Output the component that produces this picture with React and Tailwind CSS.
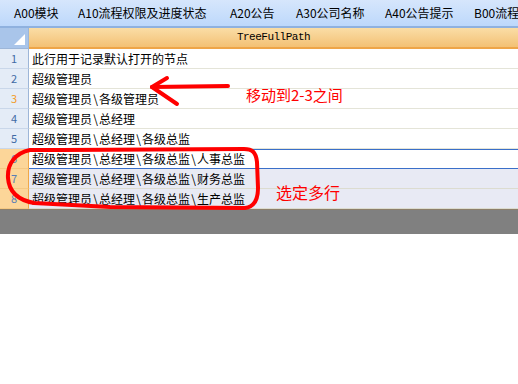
import React from "react";

const tabs = [
  { label: "A00模块", w: "w-[64px]" },
  { label: "A10流程权限及进度状态", w: "w-[152px]" },
  { label: "A20公告", w: "w-[66px]" },
  { label: "A30公司名称", w: "w-[89px]" },
  { label: "A40公告提示", w: "w-[89px]" },
  { label: "B00流程", w: "w-[60px]" },
];

const rows = [
  "此行用于记录默认打开的节点",
  "超级管理员",
  "超级管理员\\各级管理员",
  "超级管理员\\总经理",
  "超级管理员\\总经理\\各级总监",
  "超级管理员\\总经理\\各级总监\\人事总监",
  "超级管理员\\总经理\\各级总监\\财务总监",
  "超级管理员\\总经理\\各级总监\\生产总监",
];

const cjk = { fontFamily: '"Noto Sans CJK SC", "Noto Sans", sans-serif' };

// backslash in the old grid font is a half-width cell, wider than Noto's
const PathText = ({ text }) => {
  const parts = text.split("\\");
  return (
    <span>
      {parts.map((p, i) => (
        <React.Fragment key={i}>
          {i > 0 && <span className="inline-block w-[7px] text-center">\</span>}
          {p}
        </React.Fragment>
      ))}
    </span>
  );
};

export default function App() {
  return (
    <div className="relative w-[518px] h-[384px] bg-white overflow-hidden" style={cjk}>
      {/* tab strip */}
      <div className="flex h-[28px] items-center pl-[14px] bg-gradient-to-b from-[#d6e6fc] to-[#bdd8fb] border-b-2 border-[#8fb1df] whitespace-nowrap overflow-hidden">
        {tabs.map((t) => (
          <div key={t.label} className={`${t.w} shrink-0 text-[12px] leading-none text-black`}>
            {t.label}
          </div>
        ))}
      </div>

      {/* header row */}
      <div className="flex h-[21px]">
        <div className="relative w-[29px] shrink-0 bg-[#a9c5ea] border-r border-[#9db6d8] border-b border-[#9db6d8]">
          <div className="absolute right-[3px] bottom-[3px] w-0 h-0 border-l-[11px] border-l-transparent border-b-[11px] border-b-white" />
        </div>
        <div className="flex-1 flex items-center justify-center bg-gradient-to-b from-[#fadda6] to-[#f3c174] border-b-2 border-[#eea548]">
          <span
            className="text-[11px] leading-none tracking-[-0.5px] text-black"
            style={{ fontFamily: '"Liberation Mono", monospace' }}
          >
            TreeFullPath
          </span>
        </div>
      </div>

      {/* data rows */}
      <div className="flex flex-col">
        {rows.map((r, i) => {
          const n = i + 1;
          const sel = n >= 6;
          const current = n === 6;
          return (
            <div key={n} className="flex h-[20px]">
              <div
                className={
                  sel
                    ? "w-[29px] shrink-0 flex items-center justify-center bg-[#fcd699] border-r border-[#f0a848] border-b border-b-[#f5c983] text-[11px] text-[#5a7fb5]"
                    : "w-[29px] shrink-0 flex items-center justify-center bg-[#e4ecf7] border-r border-[#9db6d8] border-b border-b-[#c9d7ea] text-[11px] " +
                      (n === 3 ? "text-[#f39a1e]" : "text-[#3f6aa5]")
                }
              >
                {n}
              </div>
              <div
                className={
                  "flex-1 flex items-center pl-[3px] text-[12px] text-black whitespace-nowrap " +
                  (current
                    ? "bg-white border-y border-[#3a6fc9]"
                    : sel
                    ? "bg-[#e8eaf4] border-b border-[#dcdcd0]"
                    : "bg-white border-b border-[#e4e4d8]")
                }
              >
                <PathText text={r} />
              </div>
            </div>
          );
        })}
      </div>

      {/* empty grey area */}
      <div className="h-[25px] bg-[#808080] border-t border-[#8c7f6a]" />

      {/* annotations */}
      <svg className="absolute left-0 top-0 pointer-events-none" width="518" height="384">
        <g fill="none" stroke="#ff0000" strokeWidth="4" strokeLinecap="round" strokeLinejoin="round">
          <path d="M152 87 L228 86" />
          <path d="M152 87 L167 78" />
          <path d="M152 87 L177 104" />
          <path d="M30 150 C16 153 7 163 8 178 C9 192 18 200 34 203 L110 207 L245 208 C254 207 258 200 258 188 L257 162 C256 152 252 149 244 149 L60 150 C48 150 38 150 30 150" />
        </g>
      </svg>
      <div className="absolute left-[246px] top-[87px] text-[15px] leading-none text-[#ff0000] whitespace-nowrap">
        移动到2-3之间
      </div>
      <div className="absolute left-[276px] top-[184px] text-[16px] leading-none text-[#ff0000] whitespace-nowrap">
        选定多行
      </div>
    </div>
  );
}
